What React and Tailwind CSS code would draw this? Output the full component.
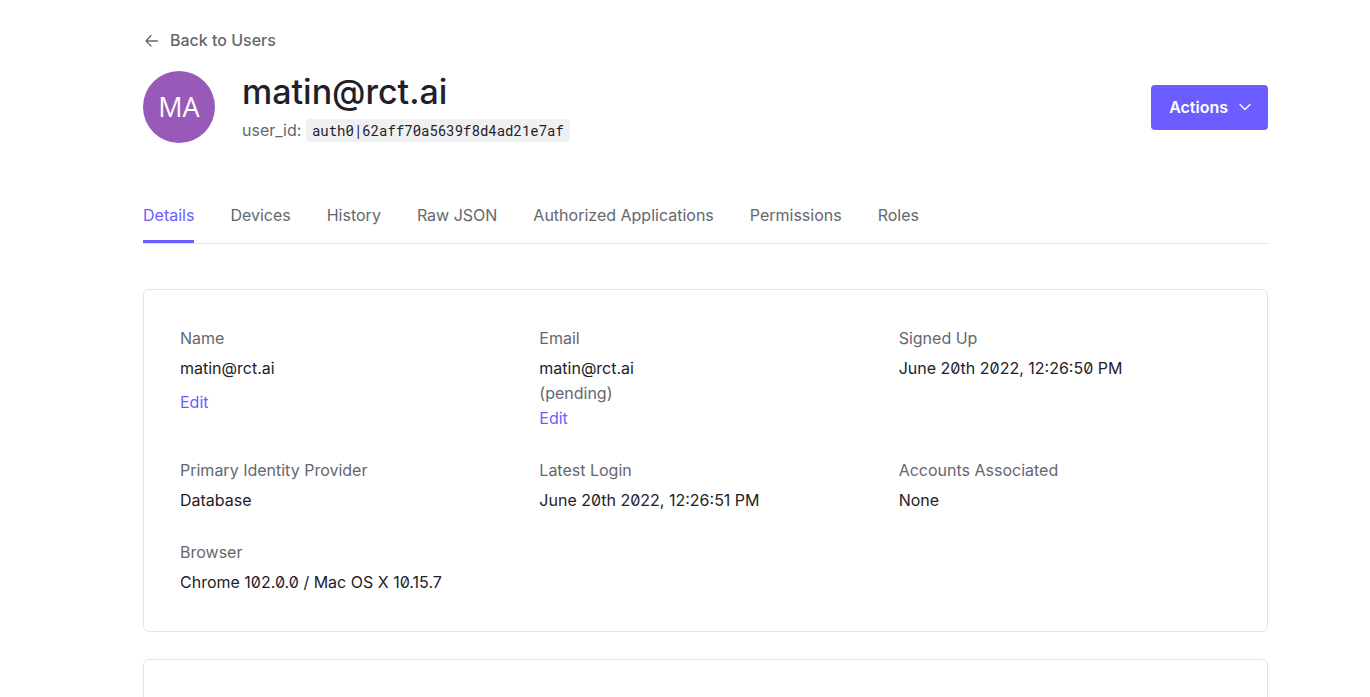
import React from "react";

const tabs = ["Details", "Devices", "History", "Raw JSON", "Authorized Applications", "Permissions", "Roles"];

function Field({ label, children }) {
  return (
    <div>
      <dt className="leading-6 text-[#65676e]">{label}</dt>
      <dd className="mt-1.5 leading-[25px]">{children}</dd>
    </div>
  );
}

export default function App() {
  return (
    <main className="mx-auto h-screen max-w-[1370px] overflow-hidden bg-white pr-[102px] pl-[143px] pt-7 font-['Inter',sans-serif] text-[16px] leading-6 text-[#1e212a] [font-feature-settings:'zero']">
      <a href="#users" className="flex w-fit items-center gap-2.5 font-medium text-[#65676e]">
        <svg width="17" height="16" viewBox="0 0 17 16" fill="none" stroke="currentColor" strokeWidth="1.3" strokeLinecap="round" strokeLinejoin="round">
          <path d="M14.5 9H3M8 3.5L3 9L8 14" />
        </svg>
        Back to Users
      </a>
      <header className="mt-[19px] flex items-center justify-between">
        <div className="flex items-center gap-[27px]">
          <div className="flex size-[72px] items-center justify-center rounded-full bg-[#985ab8] font-['Open_Sans',sans-serif] text-[27px] text-white">MA</div>
          <div>
            <h1 className="text-[34px] leading-10 font-medium">matin@rct.ai</h1>
            <p className="mt-1.5 text-[#65676e]">
              user_id:{" "}
              <code className="inline-block rounded bg-[#eff0f2] px-1.5 font-['Roboto_Mono','Liberation_Mono',monospace] text-[14px] leading-[23px] text-[#1e212a]">auth0|62aff70a5639f8d4ad21e7af</code>
            </p>
          </div>
        </div>
        <button type="button" className="flex h-[45px] items-center gap-[11px] rounded bg-[#6b5dff] pr-[17px] pl-[18px] font-semibold text-white">
          Actions
          <svg width="12" height="8" viewBox="0 0 12 8" fill="none" stroke="currentColor" strokeWidth="1.4" strokeLinecap="round" strokeLinejoin="round">
            <path d="M1 1.5L6 6.5L11 1.5" />
          </svg>
        </button>
      </header>
      <nav className="mt-[60px] flex gap-9 border-b border-[#e3e4e6] text-[#65676e]">
        {tabs.map((tab, i) => (
          <a key={tab} href="#tab" className={i === 0 ? "border-b-3 border-[#6b5dff] pb-[13px] text-[#6b5dff]" : "pb-4"}>{tab}</a>
        ))}
      </nav>
      <section className="mt-[45px] rounded-md border border-[#e3e4e6] p-9">
        <dl className="grid grid-cols-3 gap-x-[27px] gap-y-[27px]">
          <Field label="Name">
            <div>matin@rct.ai</div>
            <a href="#name" className="mt-[9px] inline-block text-[#6b5dff]">Edit</a>
          </Field>
          <Field label="Email">
            <div>matin@rct.ai</div>
            <div className="text-[#65676e]">(pending)</div>
            <a href="#email" className="text-[#6b5dff]">Edit</a>
          </Field>
          <Field label="Signed Up">June 20th 2022, 12:26:50 PM</Field>
          <Field label="Primary Identity Provider">Database</Field>
          <Field label="Latest Login">June 20th 2022, 12:26:51 PM</Field>
          <Field label="Accounts Associated">None</Field>
          <Field label="Browser">Chrome 102.0.0 / Mac OS X 10.15.7</Field>
        </dl>
      </section>
      <section className="mt-[27px] h-40 rounded-md border border-[#e3e4e6]"></section>
    </main>
  );
}
